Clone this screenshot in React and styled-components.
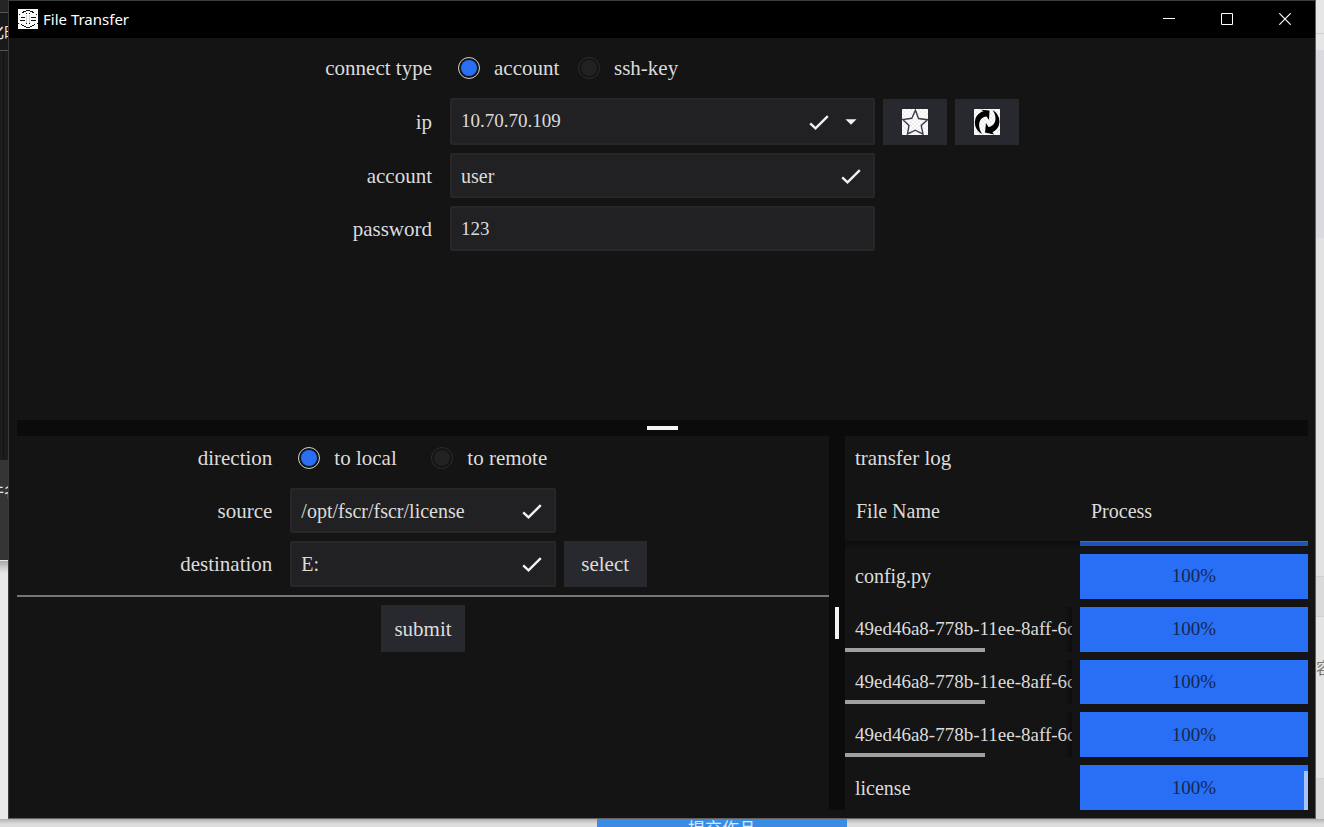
import React, { useState } from "react";
import styled, { createGlobalStyle } from "styled-components";

const Global = createGlobalStyle`
  * { box-sizing: border-box; }
  html, body, #root { height: 100%; }
  body { margin: 0; background: #dedede; overflow: hidden; }
  button, input, select { font: inherit; color: inherit; margin: 0; }
`;

const serif = `"Liberation Serif", "Times New Roman", serif`;
const sans = `"Noto Sans", "Noto Sans CJK SC", sans-serif`;

/* Desktop behind the window */
const Desktop = styled.div`
  min-height: 100%;
  display: grid;
  grid-template-columns: 8px minmax(0, 1fr) 8px;
  grid-template-rows: minmax(0, 1fr) 8px;
  font-family: ${sans};
`;
const Strip = styled.div`
  display: flex;
  flex-direction: column;
  overflow: hidden;
  min-width: 0;
`;
const Patch = styled.div`
  display: flex;
  align-items: center;
  justify-content: ${(p) => p.$align || "center"};
  flex: ${(p) => (p.$h ? `0 0 ${p.$h}px` : "1")};
  background: ${(p) => p.$bg};
  border-top: 1px solid ${(p) => p.$line || "transparent"};
  color: ${(p) => p.$color || "#e8e8e8"};
  font-size: 16px;
  line-height: 20px;
  white-space: nowrap;
  overflow: hidden;
`;
const Taskline = styled.div`
  grid-column: 1 / -1;
  display: grid;
  grid-template-columns: 597fr 250fr 477fr;
  background: linear-gradient(#b0b0b0, #dddddd 5px);
  overflow: hidden;
`;
const UploadLink = styled.a`
  grid-column: 2;
  background: #398ce4;
  color: #d7e8fb;
  text-align: center;
  text-decoration: none;
  font-size: 17px;
  line-height: 20px;
`;

/* Window */
const Frame = styled.main`
  display: flex;
  flex-direction: column;
  min-width: 0;
  background: #141414;
  border: 1px solid #3c3c3c;
  border-right-color: #626262;
  border-bottom-color: #626262;
`;
const TitleBar = styled.header`
  flex: 0 0 37px;
  display: flex;
  align-items: center;
  gap: 5px;
  padding: 0 1px 2px 9px;
  background: #000;
  color: #fff;
`;
const Title = styled.h1`
  flex: 1;
  margin: 0;
  font-size: 15px;
  line-height: 20px;
  font-weight: 400;
`;
const Controls = styled.div`
  display: flex;
  align-self: stretch;
`;
const ControlButton = styled.button`
  width: 58px;
  padding: 0;
  border: 0;
  background: transparent;
  color: #fff;
  display: grid;
  place-items: center;
`;
const Content = styled.div`
  flex: 1;
  min-height: 0;
  display: grid;
  grid-template-rows: minmax(0, 382fr) 16px minmax(0, 374fr);
  padding: 0 7px 8px 8px;
  color: #dcdcdc;
  font-family: ${serif};
  font-size: 21px;
  line-height: 26px;
`;
const Lower = styled.div`
  display: grid;
  grid-template-columns: minmax(0, 812fr) 16px minmax(0, 463fr);
  min-height: 0;
`;
const Splitter = styled.div`
  display: grid;
  place-items: center;
  background: #0b0b0b;
  &::after {
    content: "";
    width: ${(p) => (p.$vertical ? 4 : 31)}px;
    height: ${(p) => (p.$vertical ? 32 : 4)}px;
    background: #f5f5f3;
  }
`;

/* Forms */
const Form = styled.form`
  display: flex;
  flex-direction: column;
  gap: 8px;
  padding-top: ${(p) => p.$top}px;
`;
const Row = styled.div`
  display: grid;
  grid-template-columns: repeat(3, minmax(0, 1fr));
  gap: 8px;
  height: ${(p) => p.$h || 45}px;
  align-items: stretch;
`;
const Label = styled.label`
  align-self: center;
  text-align: right;
  padding-right: 10px;
`;
const Field = styled.div`
  display: flex;
  align-items: center;
  gap: 12px;
  padding: 0 12px 0 9px;
  background: #212123;
  border: 2px solid #272729;
  border-radius: 2px;
  svg { flex: none; }
`;
const TextInput = styled.input`
  flex: 1;
  min-width: 0;
  padding: 0;
  border: 0;
  outline: 0;
  background: transparent;
  font-size: ${(p) => (p.$numeric ? 19 : 20)}px;
`;
const Picker = styled.select`
  flex: 1;
  min-width: 0;
  padding: 0 0 2px;
  border: 0;
  outline: 0;
  appearance: none;
  background: transparent;
  font-size: 19px;
`;
const Options = styled.div`
  display: flex;
  align-items: center;
  padding-left: 8px;
`;
const Option = styled.label`
  display: flex;
  align-items: center;
  gap: 14px;
  min-width: ${(p) => p.$w}px;
  white-space: nowrap;
`;
const Radio = styled.input`
  appearance: none;
  flex: none;
  width: 22px;
  height: 22px;
  padding: 2px;
  border: 1px solid #2c2c2c;
  border-radius: 50%;
  background: #212123 content-box;
  &:checked {
    border-color: #d2d2d0;
    background: #286ff5 content-box;
  }
`;
const Actions = styled.div`
  display: flex;
  gap: 8px;
  justify-content: ${(p) => (p.$center ? "center" : "flex-start")};
`;
const Button = styled.button`
  display: grid;
  place-items: center;
  width: ${(p) => p.$w}px;
  height: ${(p) => p.$h || 46}px;
  align-self: end;
  padding: 0;
  border: 0;
  background: #28292e;
`;
const Rule = styled.hr`
  width: 100%;
  height: 2px;
  margin: 0;
  border: 0;
  background: #777;
`;

/* Log */
const Log = styled.section`
  position: relative;
  display: flex;
  flex-direction: column;
  min-height: 0;
  overflow: hidden;
`;
const LogTitle = styled.h2`
  margin: 0;
  padding-left: 10px;
  font-size: 21px;
  font-weight: 400;
  line-height: 44px;
`;
const Table = styled.table`
  flex: 1;
  min-height: 0;
  display: flex;
  flex-direction: column;
  padding-top: 8px;
`;
const Head = styled.thead`
  display: block;
  flex: 0 0 53px;
`;
const Body = styled.tbody`
  display: flex;
  flex: 1;
  flex-direction: column;
  gap: 8px;
  min-height: 0;
  background: linear-gradient(#0c0c0c, #141414 8px);
`;
const Line = styled.tr`
  display: grid;
  grid-template-columns: minmax(0, 227fr) minmax(0, 228fr);
  gap: 8px;
  flex: ${(p) => (p.$sliver ? "0 0 5px" : "1")};
  min-height: 0;
`;
const HeadCell = styled.th`
  padding: 0 0 0 11px;
  text-align: left;
  font-size: 20px;
  font-weight: 400;
  line-height: 46px;
`;
const NameCell = styled.td`
  display: flex;
  flex-direction: column;
  justify-content: center;
  position: relative;
  padding: 0 0 0 10px;
  overflow: hidden;
  white-space: nowrap;
  font-size: ${(p) => (p.$long ? 19 : 20)}px;
`;
const NameScroll = styled.span`
  position: absolute;
  left: 0;
  bottom: 0;
  width: 140px;
  height: 4px;
  background: #a0a0a0;
`;
const EdgeShade = styled.span`
  position: absolute;
  inset: 0 0 0 auto;
  width: 8px;
  background: linear-gradient(90deg, transparent, rgba(0, 0, 0, 0.4));
`;
const BarCell = styled.td`
  display: grid;
  padding: 0;
`;
const Bar = styled.div`
  display: grid;
  place-items: center;
  background: ${(p) => (p.$dim ? "#1f54b6" : "#286ff5")};
  border-top: ${(p) => (p.$dim ? "1px solid #286ff5" : "0")};
  color: #17284d;
  font-size: 19px;
`;
const LogThumb = styled.div`
  position: absolute;
  right: 0;
  bottom: 0;
  width: 4px;
  height: 39px;
  background: #a6c4fb;
`;

const AppIcon = () => (
  <svg width="20" height="20" viewBox="0 0 20 20" aria-hidden="true">
    <rect width="20" height="20" fill="#fafafa" />
    <g stroke="#111" fill="none">
      <path d="M8 1.500h4M5 2.500h3M12 2.500h3M4 3.500h2M14 3.500h2M8 4.500h1M11 4.500h1M1 5.500h1M18 5.500h1" />
      <path d="M3 8.500h4M13 8.500h5M2 11.500h5M13 11.500h5" />
      <path d="M0 14.500h1M19 14.500h1M8 14.500h1M11 14.500h1M3 15.500h1M16 15.500h1M4 16.500h2M14 16.500h2M6 17.500h2M12 17.500h2M8 18.500h4" />
      <path d="M8.500 6v8M11.500 6v8" stroke="#ccc" />
    </g>
  </svg>
);
const Check = () => (
  <svg width="20" height="16" viewBox="0 0 20 16" aria-hidden="true">
    <path d="M1.200 9.300l5.300 5L18.800 2.200" fill="none" stroke="#f2f2f2" strokeWidth="2.400" />
  </svg>
);
const Caret = () => (
  <svg width="20" height="6" viewBox="0 0 20 6" aria-hidden="true">
    <path d="M4.500 .2h11L10 5.700z" fill="#f2f2f2" />
  </svg>
);
const Tile = ({ id, children }) => (
  <svg width="26" height="26" viewBox="0 0 26 26" aria-hidden="true">
    <defs>
      <pattern id={id} width="4" height="4" patternUnits="userSpaceOnUse">
        <path d="M0 0h2v2H0zM2 2h2v2H2z" fill="#eee" />
      </pattern>
    </defs>
    <rect width="26" height="26" fill="#fff" />
    <rect width="26" height="26" fill={`url(#${id})`} />
    {children}
  </svg>
);
const Star = () => (
  <Tile id="star-check">
    <path
      d="M13.500 1.200L16.500 9.500 25.500 10.700 19.200 16.500 21 25.200 13.300 21.200 5.500 25 7 16.400.8 10.500 9.800 9.300z"
      fill="none" stroke="#3d3b4d" strokeWidth="1.400"
    />
  </Tile>
);
const Refresh = () => (
  <Tile id="refresh-check">
    <path d="M8 25C-1 20.500-1.500 8 6.500 3.500 8 2.700 9 2.400 10 2.300L6.500.8 15.500 1.500 15 11 12.500 7.500C5.500 8 2.500 16 8 25z" fill="#000" />
    <path d="M18.500 1C27 5.500 28 17.500 19.800 22.500L18.500 23.300 20 25.500 11 23.500 12 14 14.500 18C21.500 17 24 8.500 18.500 1z" fill="#000" />
  </Tile>
);

const hash = "49ed46a8-778b-11ee-8aff-6c";
const files = [
  { name: "config.py" },
  { name: hash, long: true },
  { name: hash, long: true },
  { name: hash, long: true },
  { name: "license" },
];

function RadioPair({ name, options, width }) {
  const [value, setValue] = useState(options[0]);
  return (
    <Options role="radiogroup" aria-label={name}>
      {options.map((o) => (
        <Option key={o} $w={width}>
          <Radio type="radio" name={name} checked={value === o} onChange={() => setValue(o)} />
          {o}
        </Option>
      ))}
    </Options>
  );
}

function ConnectionForm() {
  return (
    <Form $top={7} onSubmit={(e) => e.preventDefault()}>
      <Row>
        <Label as="span">connect type</Label>
        <RadioPair name="connect type" options={["account", "ssh-key"]} width={120} />
      </Row>
      <Row $h={47}>
        <Label htmlFor="ip">ip</Label>
        <Field>
          <Picker id="ip"><option>10.70.70.109</option></Picker>
          <Check />
          <Caret />
        </Field>
        <Actions>
          <Button type="button" $w={64} aria-label="favorite"><Star /></Button>
          <Button type="button" $w={64} aria-label="refresh"><Refresh /></Button>
        </Actions>
      </Row>
      <Row>
        <Label htmlFor="account">account</Label>
        <Field><TextInput id="account" defaultValue="user" /><Check /></Field>
      </Row>
      <Row>
        <Label htmlFor="password">password</Label>
        <Field><TextInput id="password" defaultValue="123" $numeric /></Field>
      </Row>
    </Form>
  );
}

function TransferForm() {
  return (
    <Form $top={0} onSubmit={(e) => e.preventDefault()}>
      <Row $h={44}>
        <Label as="span">direction</Label>
        <RadioPair name="direction" options={["to local", "to remote"]} width={133} />
      </Row>
      <Row>
        <Label htmlFor="source">source</Label>
        <Field><TextInput id="source" defaultValue="/opt/fscr/fscr/license" /><Check /></Field>
      </Row>
      <Row $h={46}>
        <Label htmlFor="destination">destination</Label>
        <Field><TextInput id="destination" defaultValue="E:" /><Check /></Field>
        <Actions><Button type="button" $w={83}>select</Button></Actions>
      </Row>
      <Rule />
      <Actions $center><Button type="submit" $w={84} $h={47}>submit</Button></Actions>
    </Form>
  );
}

function TransferLog() {
  return (
    <Log>
      <LogTitle>transfer log</LogTitle>
      <Table>
        <Head>
          <Line>
            <HeadCell>File Name</HeadCell>
            <HeadCell>Process</HeadCell>
          </Line>
        </Head>
        <Body>
          <Line $sliver>
            <NameCell />
            <BarCell><Bar $dim /></BarCell>
          </Line>
          {files.map((f, i) => (
            <Line key={i}>
              <NameCell $long={f.long}>
                {f.name}
                {f.long && <EdgeShade />}
                {f.long && <NameScroll />}
              </NameCell>
              <BarCell>
                <Bar role="progressbar" aria-valuenow={100}>100%</Bar>
              </BarCell>
            </Line>
          ))}
        </Body>
      </Table>
      <LogThumb />
    </Log>
  );
}

export default function App() {
  return (
    <>
      <Global />
      <Desktop>
        <Strip>
          <Patch $h={12} $bg="#252525" />
          <Patch $h={38} $bg="#191919" $line="#555">化时</Patch>
          <Patch $h={410} $bg="linear-gradient(90deg, #1d1d1d 3px, #121212 3px 4px, #1c1c1c 4px)" $line="#555" />
          <Patch $h={60} $bg="#353535">件名</Patch>
          <Patch $h={40} $bg="#353535" $line="#353535" />
          <Patch $bg="linear-gradient(#aaa, #e8e8e8 12px)" />
        </Strip>
        <Frame>
          <TitleBar>
            <AppIcon />
            <Title>File Transfer</Title>
            <Controls>
              <ControlButton aria-label="minimize">
                <svg width="12" height="12"><path d="M0 5.500h12" stroke="#fff" /></svg>
              </ControlButton>
              <ControlButton aria-label="maximize">
                <svg width="12" height="12"><path d="M.5.5h11v11H.5z" fill="none" stroke="#fff" /></svg>
              </ControlButton>
              <ControlButton aria-label="close">
                <svg width="12" height="12"><path d="M.3.3l11.400 11.400M11.700.3L.3 11.700" stroke="#fff" strokeWidth="1.200" /></svg>
              </ControlButton>
            </Controls>
          </TitleBar>
          <Content>
            <ConnectionForm />
            <Splitter />
            <Lower>
              <TransferForm />
              <Splitter $vertical />
              <TransferLog />
            </Lower>
          </Content>
        </Frame>
        <Strip>
          <Patch $h={33} $bg="#e6e6e6" />
          <Patch $h={17} $bg="#e6e6e6" $line="#cfcfcf" />
          <Patch $h={188} $bg="#d9d9df" />
          <Patch $h={338} $bg="#e2e2e2" />
          <Patch $h={40} $bg="#dadada" $line="#d0d0d0" />
          <Patch $h={102} $bg="#e4e4e4" $line="#d0d0d0" $color="#777" $align="flex-start">容</Patch>
          <Patch $h={60} $bg="#e4e4e4" />
          <Patch $bg="#d8d8d8" $line="#d0d0d0" />
        </Strip>
        <Taskline>
          <UploadLink href="#submit">提交作品</UploadLink>
        </Taskline>
      </Desktop>
    </>
  );
}
